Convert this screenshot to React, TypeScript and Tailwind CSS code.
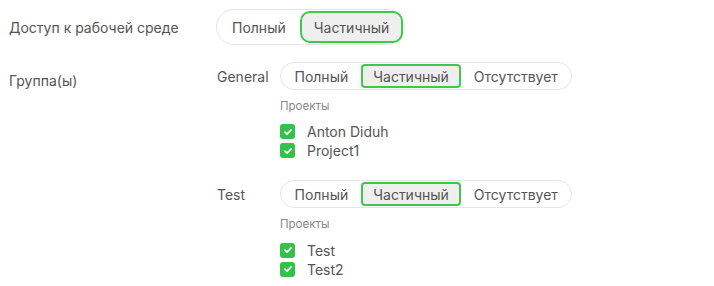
import React from "react"

const font = { fontFamily: 'Inter, "Liberation Sans", Arial, sans-serif' }

function Segmented({ options, active, size }: { options: string[]; active: number; size: "lg" | "sm" }) {
  const lg = size === "lg"
  return (
    <div
      className={
        "inline-flex items-center rounded-full border border-[#e6e6e6] bg-white p-[1px] " +
        (lg ? "h-[36px]" : "h-[28px]")
      }
    >
      {options.map((o, i) => (
        <div
          key={o}
          className={
            "flex h-full items-center justify-center text-[14px] text-[#555] " +
            (lg ? "px-[12px] " : "px-[10.5px] ") +
            (i === active
              ? "border-2 border-[#3ec84c] bg-[#efefef] " + (lg ? "rounded-[10px]" : "rounded-[4px]")
              : "border-2 border-transparent")
          }
        >
          {o}
        </div>
      ))}
    </div>
  )
}

function Check() {
  return (
    <span className="flex h-[15px] w-[15px] items-center justify-center rounded-[3px] bg-[#34c14a]">
      <svg width="10" height="10" viewBox="0 0 10 10" fill="none">
        <path d="M2 5.2 L4.1 7.2 L8 3" stroke="white" strokeWidth="1.8" strokeLinecap="round" strokeLinejoin="round" />
      </svg>
    </span>
  )
}

function Group({ name, projects }: { name: string; projects: string[] }) {
  return (
    <div className="flex">
      <div className="w-[63px] pt-[4px] text-[14px] text-[#555]">{name}</div>
      <div className="flex flex-col">
        <Segmented options={["Полный", "Частичный", "Отсутствует"]} active={1} size="sm" />
        <div className="mt-[8px] text-[11.5px] text-[#888]">Проекты</div>
        <div className="mt-[9px] flex flex-col gap-[4px]">
          {projects.map((p) => (
            <div key={p} className="flex items-center gap-[12px] text-[14px] leading-[15px] text-[#555]">
              <Check />
              <span>{p}</span>
            </div>
          ))}
        </div>
      </div>
    </div>
  )
}

export default function App() {
  return (
    <div className="h-[286px] w-[714px] bg-white pl-[9px] pt-[9px]" style={font}>
      <div className="flex items-center">
        <div className="w-[207px] text-[14px] text-[#555]">Доступ к рабочей среде</div>
        <Segmented options={["Полный", "Частичный"]} active={1} size="lg" />
      </div>
      <div className="mt-[17px] flex">
        <div className="w-[208px] pt-[8px] text-[14px] text-[#555]">Группа(ы)</div>
        <div className="flex flex-col gap-[22px]">
          <Group name="General" projects={["Anton Diduh", "Project1"]} />
          <Group name="Test" projects={["Test", "Test2"]} />
        </div>
      </div>
    </div>
  )
}
